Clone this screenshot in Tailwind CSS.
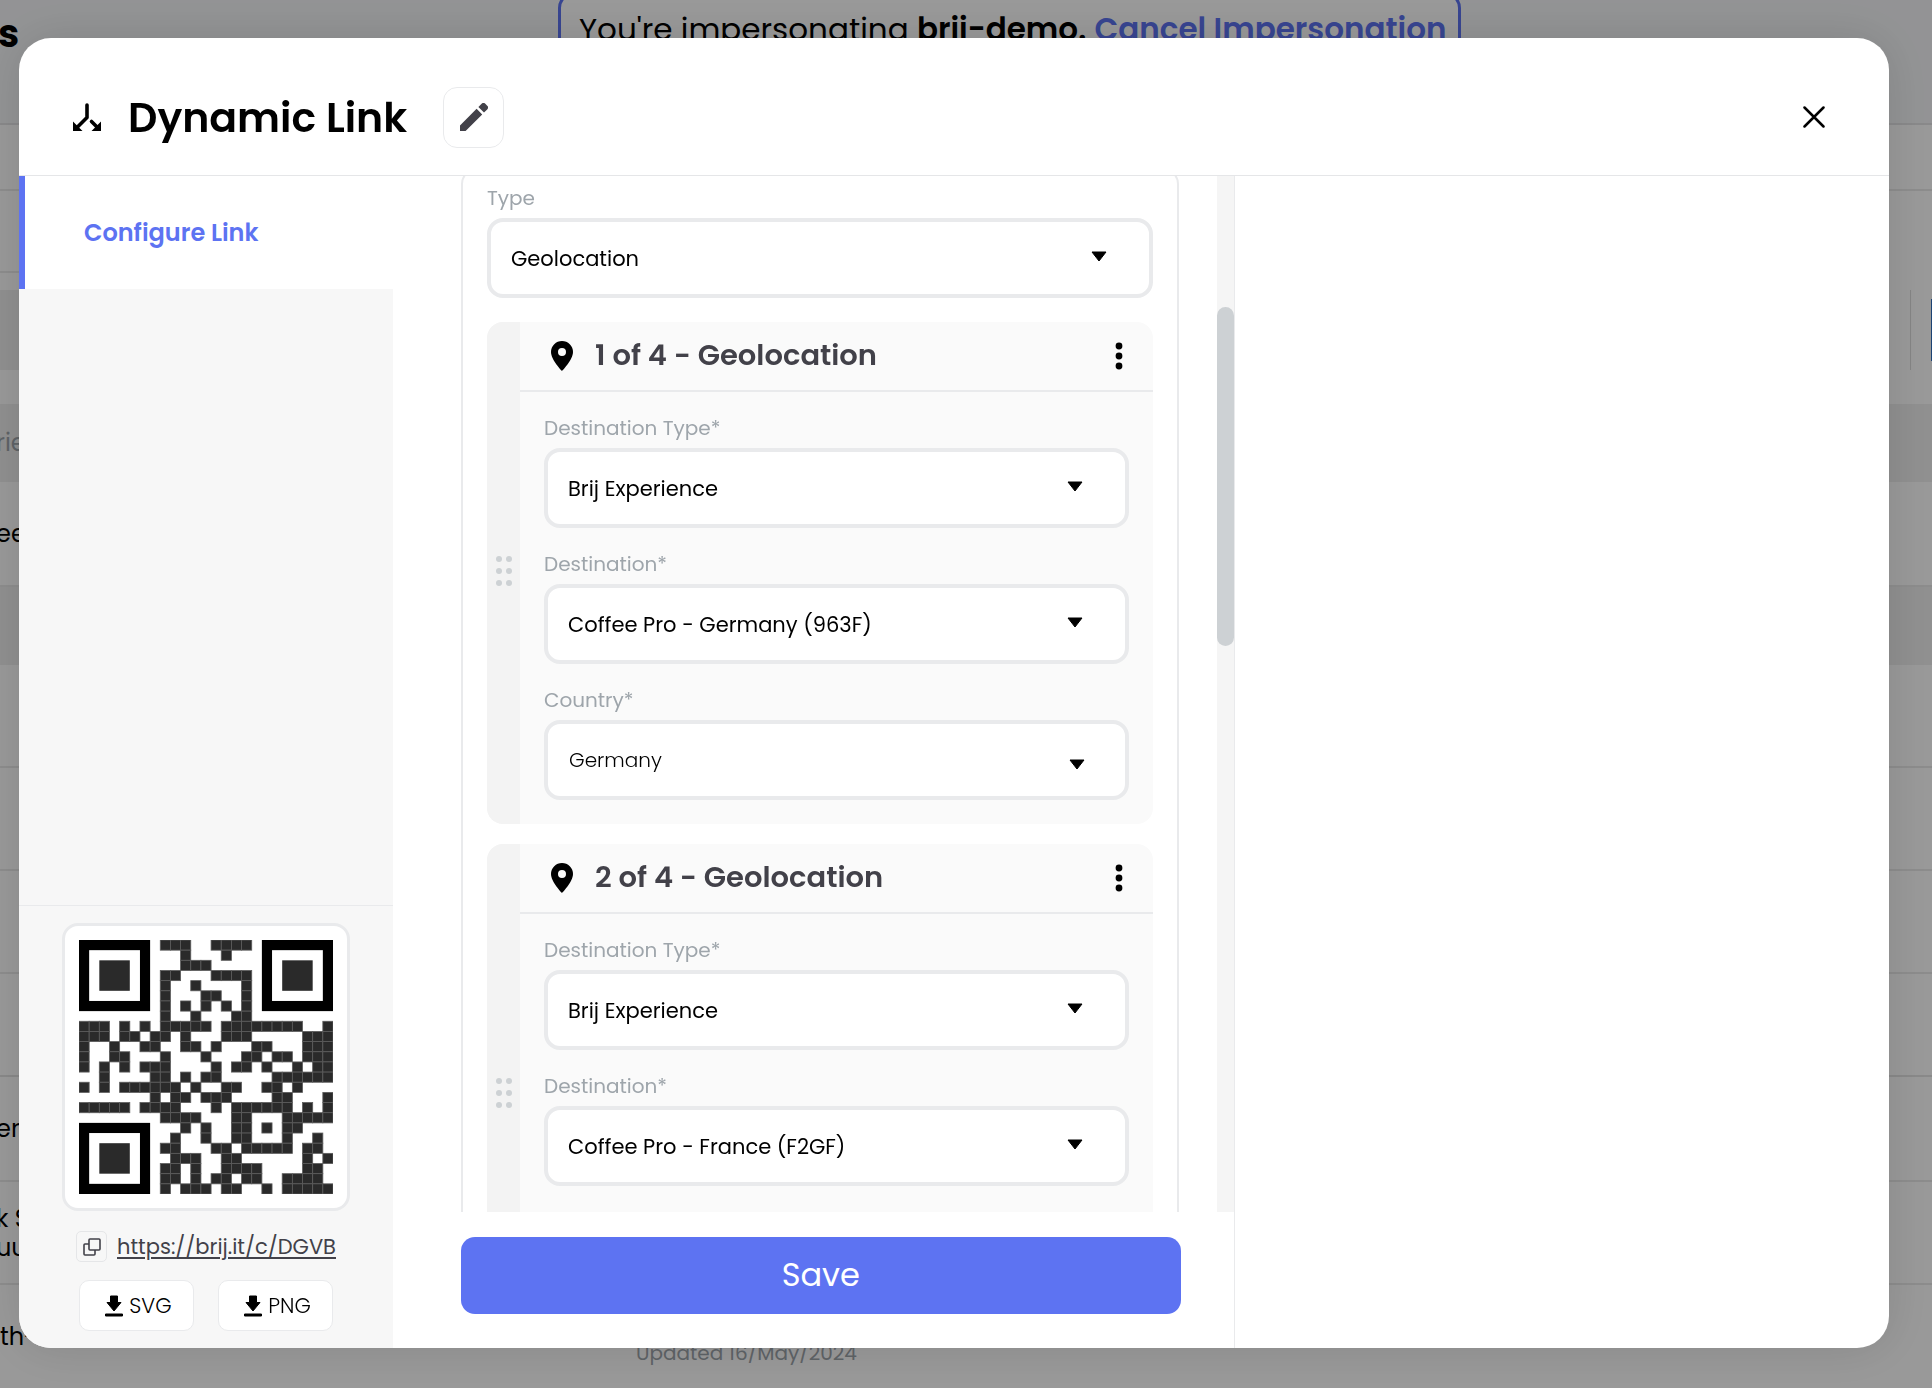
<!DOCTYPE html>
<html lang="en">
<head>
  <meta charset="UTF-8">
  <meta name="viewport" content="width=device-width, initial-scale=1.0">
  <title>Dynamic Link</title>
  <script src="https://cdn.jsdelivr.net/npm/@tailwindcss/browser@4"></script>
</head>
<body class="h-screen overflow-hidden bg-white font-['Poppins','Inter',sans-serif] text-black">

  <!-- Page behind the dialog -->
  <div class="h-screen overflow-hidden whitespace-nowrap text-[24px]" aria-hidden="true">
    <div class="flex h-[125px] items-start border-b-2 border-[#e4e4e6] bg-[#f5f6f8]">
      <div class="w-[558px] pt-2 -indent-0.5 text-[38px] leading-[52px] font-bold">s</div>
      <div class="-mt-2 h-[90px] rounded-2xl border-3 border-[#5d73f2] bg-white pt-3 pr-3 pl-[18px] text-[31px] leading-[44px]">
        You're impersonating <span class="font-semibold">brij-demo.</span>
        <span class="font-semibold text-[#5d73f2]">Cancel Impersonation</span>
      </div>
    </div>
    <div class="h-[66px] border-b-2 border-[#eaeaea]"></div>
    <div class="h-[82px] w-1/2 border-b-2 border-[#eaeaea]"></div>
    <div class="mt-[17px] flex h-[80px]">
      <div class="w-1/2 bg-[#f0f0f0]"></div>
      <div class="flex flex-1 justify-end">
        <div class="mr-5 w-px bg-[#dddddd]"></div>
        <div class="my-[9px] w-px bg-[#2f6fc0]"></div>
      </div>
    </div>
    <div class="mt-[34px] h-[78px] bg-[#f0f0f0] -indent-1 leading-[78px] text-[#9ea5ab]">rie</div>
    <div class="h-[105px] border-b-2 border-[#eaeaea] -indent-1 leading-[103px]">ee</div>
    <div class="h-[78px] bg-[#f0f0f0]"></div>
    <div class="h-[103px] border-b-2 border-[#eaeaea]"></div>
    <div class="h-[103px] border-b-2 border-[#eaeaea]"></div>
    <div class="h-[103px] border-b-2 border-[#eaeaea]"></div>
    <div class="h-[103px] border-b-2 border-[#e4e4e4]"></div>
    <div class="h-[105px] border-b-2 border-[#eaeaea] -indent-1 leading-[103px]">erc</div>
    <div class="flex h-[103px] flex-col justify-center border-b-2 border-[#eaeaea] -indent-1 leading-[29px]"><span>k S</span><span>uu</span></div>
    <div class="flex h-[103px]">
      <div class="w-[636px] leading-[103px]">th-</div>
      <div class="pt-[54px] text-[20px] leading-[28px] text-[#9ea5ab]">Updated 16/May/2024</div>
    </div>
  </div>

  <!-- Dialog -->
  <div class="fixed inset-0 flex bg-black/40 pt-[38px] pr-[43px] pb-[40px] pl-[19px]">
    <div role="dialog" aria-labelledby="dialog-title" class="flex flex-1 flex-col overflow-hidden rounded-4xl bg-white shadow-[0_0_48px_rgba(0,0,0,0.12)]">

      <header class="flex h-[138px] shrink-0 items-center border-b border-[#e5e6e8] pt-[21px] pr-[60px] pl-[54px]">
        <svg class="size-[28px]" viewBox="0 0 28 28" fill="none" stroke="#000" stroke-width="3.6">
          <path d="M14 2v12.500L4 24.500M18.500 18.500l5.500 5.500" stroke-linecap="round" stroke-linejoin="round"/>
          <path d="M0 18.500v9.500h9.500zM28 18.500v9.500h-9.500z" fill="#000" stroke="none"/>
        </svg>
        <h1 id="dialog-title" class="ml-[27px] pt-0.5 text-[41px] leading-[60px] font-semibold">Dynamic Link</h1>
        <button aria-label="Edit name" class="ml-[36px] flex size-[61px] items-center justify-center rounded-[14px] border border-[#e9eaec]">
          <svg class="size-[28px]" viewBox="0 0 28 28" fill="#424149">
            <path d="M0 22.4 16.6 5.8l5.6 5.6L5.6 28H0zM18.4 4 21.6.8a2.6 2.6 0 0 1 3.7 0l1.9 1.9a2.6 2.6 0 0 1 0 3.7L24 9.6z"/>
          </svg>
        </button>
        <button aria-label="Close" class="ml-auto flex size-[30px] items-center justify-center">
          <svg class="size-[22px]" viewBox="0 0 22 22" fill="none" stroke="#000" stroke-width="2.5" stroke-linecap="round">
            <path d="M1.5 1.5l19 19M20.5 1.5l-19 19"/>
          </svg>
        </button>
      </header>

      <div class="grid min-h-0 flex-1 grid-cols-[20%_45%_1fr]">

        <!-- Sidebar -->
        <aside class="flex min-h-0 flex-col bg-[#f7f7f7]">
          <a href="#" class="flex h-[113px] items-center border-l-6 border-[#5d73f2] bg-white pl-[59px] text-[24px] font-semibold text-[#5d73f2]">Configure Link</a>
          <div class="mt-auto flex flex-col items-center border-t border-[#e9eaec] pt-[17px] pb-[17px]">
            <div class="size-[288px] rounded-2xl border-3 border-[#e9eaec] bg-white p-[14px]">
              <svg id="qr" class="size-full" viewBox="0 0 25 25" role="img" aria-label="QR code"></svg>
            </div>
            <div class="mt-5 flex items-center gap-[10px]">
              <button aria-label="Copy link" class="flex size-[31px] items-center justify-center rounded-[5px] border border-[#e5e6e8]">
                <svg class="size-[18px]" viewBox="0 0 18 18" fill="none" stroke="#424149" stroke-width="1.6">
                  <rect x="6" y="1" width="11" height="11" rx="1"/>
                  <path d="M6 6H2a1 1 0 0 0-1 1v9a1 1 0 0 0 1 1h9a1 1 0 0 0 1-1v-4"/>
                </svg>
              </button>
              <a href="#" class="text-[21px] leading-[31px] text-[#424149] underline decoration-2 underline-offset-3">https://brij.it/c/DGVB</a>
            </div>
            <div class="mt-[18px] flex gap-6">
              <button class="flex h-[51px] w-[115px] items-center justify-center gap-[6px] rounded-[10px] border border-[#e9eaec] bg-white pl-1 text-[21px] font-light">
                <svg class="h-[22px] w-[18px]" viewBox="0 0 18 22"><path d="M5.5 1h7v6.500H16L9 16 2 7.500h3.500zM.500 19h17v2H.500z" stroke="#000" stroke-linejoin="round"/></svg>
                SVG
              </button>
              <button class="flex h-[51px] w-[115px] items-center justify-center gap-[6px] rounded-[10px] border border-[#e9eaec] bg-white pl-1 text-[21px] font-light">
                <svg class="h-[22px] w-[18px]" viewBox="0 0 18 22"><path d="M5.5 1h7v6.500H16L9 16 2 7.500h3.500zM.500 19h17v2H.500z" stroke="#000" stroke-linejoin="round"/></svg>
                PNG
              </button>
            </div>
          </div>
        </aside>

        <!-- Form -->
        <main class="flex min-h-0 flex-col border-r border-[#e9eaec]">
          <div class="flex min-h-0 flex-1 overflow-hidden">
            <div class="min-w-0 flex-1 pr-[38px] pl-[68px]">
              <form class="-mt-2 flex flex-col rounded-2xl border-2 border-[#e9eaec] px-6 pt-4 pb-6">
                <label for="type" class="mb-2 text-[20px] leading-6 text-[#9ea5ab]">Type</label>
                <div class="relative">
                  <select id="type" class="block h-[80px] w-full appearance-none rounded-2xl border-4 border-[#e9eaec] bg-white pt-0.5 pl-5 text-[21px]"><option>Geolocation</option></select>
                  <svg class="pointer-events-none absolute top-[33px] right-[46px] h-[11px] w-[16px]" viewBox="0 0 16 11"><path d="M1 1h14L8 10z" stroke="#000" stroke-linejoin="round"/></svg>
                </div>

                <!-- Rule 1 -->
                <section class="mt-6 flex overflow-hidden rounded-2xl bg-[#fafafa]">
                  <div class="flex w-[33px] shrink-0 items-center justify-center bg-[#f3f3f3] pb-1">
                    <svg class="h-[30px] w-[16px]" viewBox="0 0 16 30" fill="#cdd1d4"><circle cx="3" cy="3" r="3"/><circle cx="13" cy="3" r="3"/><circle cx="3" cy="15" r="3"/><circle cx="13" cy="15" r="3"/><circle cx="3" cy="27" r="3"/><circle cx="13" cy="27" r="3"/></svg>
                  </div>
                  <div class="min-w-0 flex-1">
                    <div class="flex h-[70px] items-center border-b-2 border-[#e9eaec] pr-[24px] pl-[31px]">
                      <svg class="h-[30px] w-[22px]" viewBox="0 0 22 30"><path fill-rule="evenodd" d="M11 0a11 11 0 0 1 11 11c0 8-11 19-11 19S0 19 0 11A11 11 0 0 1 11 0zm0 7a4 4 0 1 0 0 8 4 4 0 0 0 0-8z"/></svg>
                      <h2 class="ml-[22px] text-[29px] font-semibold text-[#424149]">1 of 4 - Geolocation</h2>
                      <button type="button" aria-label="More" class="ml-auto">
                        <svg class="h-[28px] w-[20px]" viewBox="0 0 20 28"><circle cx="10" cy="4" r="3.400"/><circle cx="10" cy="14" r="3.400"/><circle cx="10" cy="24" r="3.400"/></svg>
                      </button>
                    </div>
                    <div class="flex flex-col gap-6 p-6">
                      <div class="flex flex-col gap-2">
                        <label for="type-1" class="text-[20px] leading-6 text-[#9ea5ab]">Destination Type*</label>
                        <div class="relative">
                          <select id="type-1" class="block h-[80px] w-full appearance-none rounded-2xl border-4 border-[#e9eaec] bg-white pt-0.5 pl-5 text-[21px]"><option>Brij Experience</option></select>
                          <svg class="pointer-events-none absolute top-[33px] right-[46px] h-[11px] w-[16px]" viewBox="0 0 16 11"><path d="M1 1h14L8 10z" stroke="#000" stroke-linejoin="round"/></svg>
                        </div>
                      </div>
                      <div class="flex flex-col gap-2">
                        <label for="destination-1" class="text-[20px] leading-6 text-[#9ea5ab]">Destination*</label>
                        <div class="relative">
                          <select id="destination-1" class="block h-[80px] w-full appearance-none rounded-2xl border-4 border-[#e9eaec] bg-white pt-0.5 pl-5 text-[21px]"><option>Coffee Pro - Germany (963F)</option></select>
                          <svg class="pointer-events-none absolute top-[33px] right-[46px] h-[11px] w-[16px]" viewBox="0 0 16 11"><path d="M1 1h14L8 10z" stroke="#000" stroke-linejoin="round"/></svg>
                        </div>
                      </div>
                      <div class="flex flex-col gap-2">
                        <label for="country-1" class="text-[20px] leading-6 text-[#9ea5ab]">Country*</label>
                        <div class="relative">
                          <select id="country-1" class="block h-[80px] w-full appearance-none rounded-2xl border-4 border-[#e9eaec] bg-white pl-[21px] text-[20px] font-light"><option>Germany</option></select>
                          <svg class="pointer-events-none absolute top-[39px] right-[44px] h-[11px] w-[16px]" viewBox="0 0 16 11"><path d="M1 1h14L8 10z" stroke="#000" stroke-linejoin="round"/></svg>
                        </div>
                      </div>
                    </div>
                  </div>
                </section>

                <!-- Rule 2 -->
                <section class="mt-5 flex overflow-hidden rounded-2xl bg-[#fafafa]">
                  <div class="flex w-[33px] shrink-0 items-center justify-center bg-[#f3f3f3] pb-1">
                    <svg class="h-[30px] w-[16px]" viewBox="0 0 16 30" fill="#cdd1d4"><circle cx="3" cy="3" r="3"/><circle cx="13" cy="3" r="3"/><circle cx="3" cy="15" r="3"/><circle cx="13" cy="15" r="3"/><circle cx="3" cy="27" r="3"/><circle cx="13" cy="27" r="3"/></svg>
                  </div>
                  <div class="min-w-0 flex-1">
                    <div class="flex h-[70px] items-center border-b-2 border-[#e9eaec] pr-[24px] pl-[31px]">
                      <svg class="h-[30px] w-[22px]" viewBox="0 0 22 30"><path fill-rule="evenodd" d="M11 0a11 11 0 0 1 11 11c0 8-11 19-11 19S0 19 0 11A11 11 0 0 1 11 0zm0 7a4 4 0 1 0 0 8 4 4 0 0 0 0-8z"/></svg>
                      <h2 class="ml-[22px] text-[29px] font-semibold text-[#424149]">2 of 4 - Geolocation</h2>
                      <button type="button" aria-label="More" class="ml-auto">
                        <svg class="h-[28px] w-[20px]" viewBox="0 0 20 28"><circle cx="10" cy="4" r="3.400"/><circle cx="10" cy="14" r="3.400"/><circle cx="10" cy="24" r="3.400"/></svg>
                      </button>
                    </div>
                    <div class="flex flex-col gap-6 p-6">
                      <div class="flex flex-col gap-2">
                        <label for="type-2" class="text-[20px] leading-6 text-[#9ea5ab]">Destination Type*</label>
                        <div class="relative">
                          <select id="type-2" class="block h-[80px] w-full appearance-none rounded-2xl border-4 border-[#e9eaec] bg-white pt-0.5 pl-5 text-[21px]"><option>Brij Experience</option></select>
                          <svg class="pointer-events-none absolute top-[33px] right-[46px] h-[11px] w-[16px]" viewBox="0 0 16 11"><path d="M1 1h14L8 10z" stroke="#000" stroke-linejoin="round"/></svg>
                        </div>
                      </div>
                      <div class="flex flex-col gap-2">
                        <label for="destination-2" class="text-[20px] leading-6 text-[#9ea5ab]">Destination*</label>
                        <div class="relative">
                          <select id="destination-2" class="block h-[80px] w-full appearance-none rounded-2xl border-4 border-[#e9eaec] bg-white pt-0.5 pl-5 text-[21px]"><option>Coffee Pro - France (F2GF)</option></select>
                          <svg class="pointer-events-none absolute top-[33px] right-[46px] h-[11px] w-[16px]" viewBox="0 0 16 11"><path d="M1 1h14L8 10z" stroke="#000" stroke-linejoin="round"/></svg>
                        </div>
                      </div>
                      <div class="h-[112px]"></div>
                    </div>
                  </div>
                </section>
              </form>
            </div>
            <!-- Scrollbar -->
            <div class="w-[17px] shrink-0 bg-[#f5f5f5] pt-[131px]">
              <div class="h-[339px] rounded-full bg-[#cdd1d4]"></div>
            </div>
          </div>
          <div class="pt-[25px] pr-[53px] pb-[34px] pl-[68px]">
            <button class="h-[77px] w-full rounded-[14px] bg-[#5d73f2] pb-0.5 text-[32px] text-white">Save</button>
          </div>
        </main>

        <div></div>
      </div>
    </div>
  </div>

  <script>
    // QR modules, one string per row; the three finder patterns are drawn separately
    const rows = [
      "........###..####........",
      "..........#...#..........",
      "..........###............",
      "........##...####........",
      "........#..#....#........",
      "........#...##..#........",
      "........#.#.#.#.#........",
      "........#..#...##........",
      "###.#.#.#####.########..#",
      "###.##.##.#...###.....###",
      "#..#..##..##.#...##...###",
      "#..##...#...#...##.##.###",
      "#.#.#.###....#.##.#..#.##",
      "..#....##.#.##.....######",
      "#.#.######.#..##..##.#...",
      ".......#.##.###....##...#",
      "#####.####...#.######.#.#",
      "........####...##...#####",
      "..........#.#..##.#.##...",
      ".........#..#..##...#..#.",
      "........##...##.#####.##.",
      ".........###..##......#.#",
      "........##.#..####....##.",
      "........##.#.##.##..####.",
      "........#.###.##..#.#####",
    ];

    let shapes = "";
    rows.forEach((row, y) => {
      [...row].forEach((cell, x) => {
        if (cell === "#") {
          shapes += `<rect x="${x}" y="${y}" width="1" height="1" fill="#2a2a2a" stroke="#5c5c5c" stroke-width="0.08"/>`;
        }
      });
    });

    [[0, 0], [18, 0], [0, 18]].forEach(([x, y]) => {
      shapes += `<rect x="${x + 0.5}" y="${y + 0.5}" width="6" height="6" fill="none" stroke="#000"/>`;
      shapes += `<rect x="${x + 2}" y="${y + 2}" width="3" height="3" fill="#2a2a2a"/>`;
    });

    document.getElementById("qr").innerHTML = shapes;
  </script>
</body>
</html>
